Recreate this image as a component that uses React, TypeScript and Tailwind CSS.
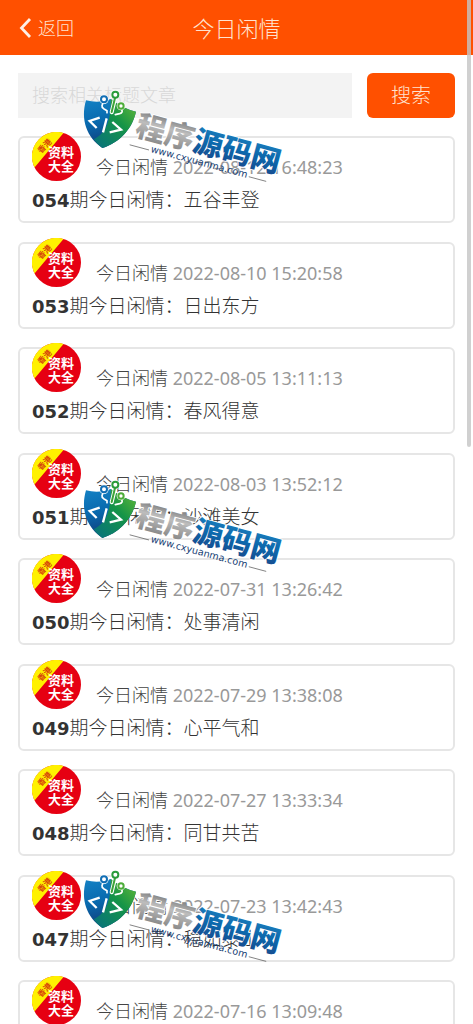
import { FormEvent, useState } from 'react';

const posts = [
  { issue: '054', title: '五谷丰登', date: '2022-08-12 16:48:23' },
  { issue: '053', title: '日出东方', date: '2022-08-10 15:20:58' },
  { issue: '052', title: '春风得意', date: '2022-08-05 13:11:13' },
  { issue: '051', title: '沙滩美女', date: '2022-08-03 13:52:12' },
  { issue: '050', title: '处事清闲', date: '2022-07-31 13:26:42' },
  { issue: '049', title: '心平气和', date: '2022-07-29 13:38:08' },
  { issue: '048', title: '同甘共苦', date: '2022-07-27 13:33:34' },
  { issue: '047', title: '稳如泰山', date: '2022-07-23 13:42:43' },
  { issue: '046', title: '风调雨顺', date: '2022-07-16 13:09:48' },
];

export default function App() {
  const [keyword, setKeyword] = useState('');

  const handleSearch = (e: FormEvent) => {
    e.preventDefault();
  };

  return (
    <div className="relative h-screen overflow-hidden bg-white font-['Noto_Sans','Noto_Sans_CJK_SC',sans-serif]">
      <div className="h-full overflow-y-auto [scrollbar-width:none]">
        <header className="grid h-[55px] grid-cols-[1fr_auto_1fr] items-center bg-[#ff5000] px-[18px] text-[#ffe3d0]">
          <a href="#" className="flex items-center gap-1 text-[18px] leading-7 font-light">
            <svg className="h-5 w-4" viewBox="0 0 16 20" fill="none" stroke="#fff0e6" strokeWidth="2.8">
              <path d="M12 1 3.500 10 12 19" />
            </svg>
            返回
          </a>
          <h1 className="text-[22px] leading-8 font-light">今日闲情</h1>
        </header>

        <main className="px-[18px] pt-[18px]">
          <form onSubmit={handleSearch} className="mb-[18px] flex h-[45px] gap-[15px]">
            <input
              type="text"
              aria-label="搜索"
              placeholder="搜索相关标题文章"
              value={keyword}
              onChange={(e) => setKeyword(e.target.value)}
              className="min-w-0 flex-1 bg-[#f3f3f3] px-[14px] text-[18px] font-light text-[#333] outline-none placeholder:text-[#d8d8d8]"
            />
            <button type="submit" className="w-[88px] rounded-md bg-[#ff5000] text-[20px] font-light text-[#ffe3d0]">
              搜索
            </button>
          </form>

          <ul>
            {posts.map((post) => (
              <PostCard key={post.issue} {...post} />
            ))}
          </ul>
        </main>
      </div>

      <div className="absolute top-0 right-[2px] h-[447px] w-1 rounded-b-sm bg-[#c4c4c4]/80" />

      <div className="pointer-events-none absolute top-20 left-[70px] flex flex-col gap-[280px]">
        <Watermark id="wm-top" />
        <Watermark id="wm-middle" />
        <Watermark id="wm-bottom" />
      </div>
    </div>
  );
}

interface PostCardProps {
  issue: string;
  title: string;
  date: string;
}

function PostCard({ issue, title, date }: PostCardProps) {
  return (
    <li className="rounded-md border-2 border-[#e6e6e6] px-3 pb-[7px] odd:mb-[19px] even:mb-[18px]">
      <a href="#" className="block">
        <div className="-mt-[6px] flex items-end gap-[15px]">
          <Badge />
          <p className="h-7 text-[18px] leading-7 font-light text-[#444]">
            今日闲情 <time className="font-normal text-[#999]">{date}</time>
          </p>
        </div>
        <h2 className="mt-[5px] h-7 text-[19px] leading-7 font-light text-[#333]">
          <b className="font-['DejaVu_Sans',sans-serif] text-[18px] font-bold">{issue}</b>期今日闲情：{title}
        </h2>
      </a>
    </li>
  );
}

function Badge() {
  return (
    <svg className="h-[49px] w-[49px] shrink-0" viewBox="0 0 49 49" fontFamily="'Noto Sans CJK SC', sans-serif" fontWeight="700">
      <circle cx="24.5" cy="24.500" r="24.500" fill="#e60012" />
      <path d="M2.500 35.500A24.500 24.500 0 0 1 31.500 1Z" fill="#fff100" />
      <text x="12.500" y="17" fontSize="8" fill="#d7440b" textAnchor="middle" transform="rotate(-46 12.500 14)">
        香港
      </text>
      <text x="29" y="25" fontSize="13" fill="#fff" textAnchor="middle">资料</text>
      <text x="29" y="39" fontSize="13" fill="#fff" textAnchor="middle">大全</text>
    </svg>
  );
}

function Watermark({ id }: { id: string }) {
  return (
    <svg className="h-[110px] w-[220px]" viewBox="0 0 660 330" aria-hidden="true">
      <defs>
        <linearGradient id={`${id}-left`} x1="0" y1="0" x2="0.3" y2="1">
          <stop offset="0" stopColor="#1482c5" />
          <stop offset="0.5" stopColor="#0969ae" />
          <stop offset="1" stopColor="#123a75" />
        </linearGradient>
        <linearGradient id={`${id}-right`} x1="1" y1="0" x2="0.1" y2="1">
          <stop offset="0" stopColor="#6abb35" />
          <stop offset="0.45" stopColor="#159447" />
          <stop offset="1" stopColor="#08737c" />
        </linearGradient>
        <linearGradient id={`${id}-grey`} x1="0" y1="0" x2="0" y2="1">
          <stop offset="0.1" stopColor="#6d6d6d" />
          <stop offset="0.45" stopColor="#bdbdbd" />
          <stop offset="0.9" stopColor="#858585" />
        </linearGradient>
        <linearGradient id={`${id}-blue`} x1="0" y1="0" x2="0" y2="1">
          <stop offset="0.1" stopColor="#1d80bd" />
          <stop offset="0.5" stopColor="#0c69ad" />
          <stop offset="0.9" stopColor="#174b8e" />
        </linearGradient>
      </defs>

      {/* shield */}
      <path d="M48 61C75 68 104 65 122 57Q158 86 198 95C187 145 151 187 97 204C50 172 31 119 48 61Z" fill={`url(#${id}-left)`} />
      <path d="M122 57Q158 86 198 95C187 145 151 187 97 204C85 195 78 188 71 178C111 158 123 119 122 57Z" fill={`url(#${id}-right)`} />

      {/* circuit pins */}
      <g fill="none" strokeLinecap="round" strokeLinejoin="round">
        <circle cx="136" cy="44" r="14" fill="#fff" />
        <circle cx="102" cy="58" r="14" fill="#fff" />
        <circle cx="153" cy="78" r="13" fill="#fff" />
        <path d="M135 56 125 97" stroke="#fff" strokeWidth="12" />
        <path d="M99 69 96 77Q95 82 101 86L111 92V98" stroke="#fff" strokeWidth="5" />
        <path d="M155 89Q160 98 149 101L136 104" stroke="#fff" strokeWidth="5" />
        <path d="M135 54 125 96" stroke="#3ca337" strokeWidth="6" />
        <circle cx="136" cy="44" r="9" fill="#fff" stroke="#299b3b" strokeWidth="6" />
        <circle cx="102" cy="58" r="9" fill="#fff" stroke="#126fb5" strokeWidth="6" />
        <circle cx="153" cy="78" r="8" fill="#fff" stroke="#4cac38" strokeWidth="6" />
      </g>

      {/* code mark */}
      <path d="M89 113 59 123 80 144M110 115 99 157M127 126 153 149 119 157" fill="none" stroke="#fff" strokeWidth="7" />

      <g transform="rotate(15 200 170)">
        <g fontFamily="'Noto Sans CJK SC', sans-serif" fontSize="89" fontWeight="900" stroke="#fff" strokeWidth="5" paintOrder="stroke" strokeLinejoin="round">
          <text x="191" y="167" fill={`url(#${id}-grey)`}>程序</text>
          <text x="369" y="167" fill={`url(#${id}-blue)`}>源码网</text>
        </g>
        <text x="251" y="204" fontFamily="'DejaVu Sans', sans-serif" fontSize="29" fill="#174074">
          www.cxyuanma.com
        </text>
        <path d="M186 199H246M556 199H610" stroke="#555" strokeWidth="2" />
      </g>
    </svg>
  );
}
